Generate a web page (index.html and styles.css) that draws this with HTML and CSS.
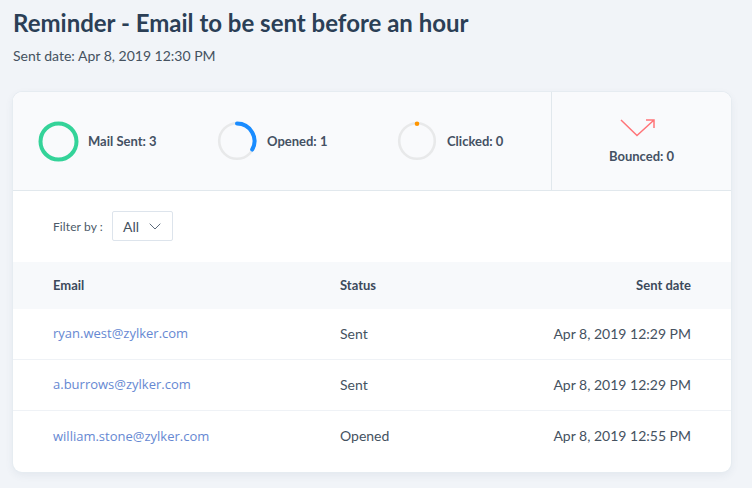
FILE: index.html
```html
<!DOCTYPE html>
<html lang="en">
<head>
<meta charset="utf-8">
<title>Reminder</title>
<link rel="stylesheet" href="styles.css">
</head>
<body>
<h1 class="title">Reminder - Email to be sent before an hour</h1>
<p class="subtitle">Sent date: Apr 8, 2019 12:30 PM</p>
<section class="card">
  <div class="stats">
    <div class="stat-main">
      <div class="stat stat-sent">
        <svg class="ring" width="41" height="41" viewBox="0 0 41 41"><circle cx="20.500" cy="20.500" r="18" fill="none" stroke="#34d399" stroke-width="4"/></svg>
        <span>Mail Sent: 3</span>
      </div>
      <div class="stat stat-opened">
        <svg class="ring" width="40" height="40" viewBox="0 0 40 40"><circle cx="20" cy="20" r="17.800" fill="none" stroke="#e8e9ea" stroke-width="2.600"/><path d="M20 2.500A17.500 17.500 0 0 1 35.200 28.600" fill="none" stroke="#1a8cff" stroke-width="4" stroke-linecap="round"/></svg>
        <span>Opened: 1</span>
      </div>
      <div class="stat stat-clicked">
        <svg class="ring" width="40" height="40" viewBox="0 0 40 40"><circle cx="20" cy="20" r="17.800" fill="none" stroke="#e8e9ea" stroke-width="2.600"/><circle cx="20" cy="2.800" r="2.300" fill="#ff9500"/></svg>
        <span>Clicked: 0</span>
      </div>
    </div>
    <div class="stat-bounced">
      <svg class="bounce" width="36" height="20" viewBox="0 0 36 20"><path d="M1 2L17 17.500L34 2M26 2H34V10" fill="none" stroke="#ff7478" stroke-width="1.500"/></svg>
      <span>Bounced: 0</span>
    </div>
  </div>
  <div class="filter">
    <span class="filter-label">Filter by :</span>
    <div class="select">
      <span>All</span>
      <svg width="12" height="7" viewBox="0 0 12 7"><path d="M.7.7L6 6l5.300-5.300" fill="none" stroke="#5c6b7c" stroke-width="1"/></svg>
    </div>
  </div>
  <div class="row head">
    <div>Email</div><div>Status</div><div class="date">Sent date</div>
  </div>
  <div class="row item">
    <div class="email">ryan.west@zylker.com</div><div>Sent</div><div class="date">Apr 8, 2019 12:29 PM</div>
  </div>
  <div class="row item">
    <div class="email">a.burrows@zylker.com</div><div>Sent</div><div class="date">Apr 8, 2019 12:29 PM</div>
  </div>
  <div class="row item last">
    <div class="email">william.stone@zylker.com</div><div>Opened</div><div class="date">Apr 8, 2019 12:55 PM</div>
  </div>
</section>
</body>
</html>
```
FILE: styles.css
```css
* { box-sizing: border-box; }
html, body { height: 100%; }
body {
  margin: 0;
  padding: 8px 21px 0 13px;
  background: #f1f4f8;
  font-family: Lato, "Liberation Sans", sans-serif;
  color: #3d4b5c;
  overflow: hidden;
}
.title {
  margin: 0;
  font-size: 24px;
  line-height: 30px;
  font-weight: 700;
  color: #2b3f56;
}
.subtitle {
  margin: 8px 0 0;
  font-size: 14px;
  line-height: 20px;
  color: #45525f;
}
.card {
  margin-top: 26px;
  height: 380px;
  background: #fff;
  border-radius: 9px;
  box-shadow: 0 0 0 1px #e6ecf1, 0 3px 8px rgba(50, 80, 110, .08);
  overflow: hidden;
}
.stats {
  display: flex;
  height: 99px;
  background: #f9fafc;
  border-bottom: 1px solid #e1e8ed;
}
.stat-main {
  flex: 1;
  display: flex;
  align-items: center;
  padding-left: 25px;
  border-right: 1px solid #e1e8ed;
}
.stat {
  display: flex;
  align-items: center;
  font-size: 13px;
  font-weight: 700;
  color: #445163;
}
.stat-sent { width: 179px; gap: 9px; }
.stat-opened { width: 180px; gap: 10px; }
.stat-clicked { gap: 10px; }
.ring { flex: none; }
.stat-bounced {
  width: 179px;
  display: flex;
  flex-direction: column;
  align-items: center;
  padding-top: 26px;
  font-size: 13px;
  font-weight: 700;
  color: #445163;
}
.bounce { margin: 0 7px 10px 0; display: block; }
.filter {
  display: flex;
  align-items: center;
  height: 71px;
  padding: 0 0 1px 40px;
}
.filter-label { width: 49px; font-size: 12px; letter-spacing: .1px; white-space: nowrap; color: #4c5a69; }
.select {
  display: flex;
  align-items: center;
  gap: 10px;
  width: 61px;
  height: 30px;
  margin-left: 10px;
  padding-left: 10px;
  border: 1px solid #dde4ec;
  border-radius: 2px;
  background: #fff;
  font-size: 14px;
  color: #45525f;
}
.row {
  display: grid;
  grid-template-columns: 287px 1fr 200px;
  align-items: center;
  padding: 0 40px 1px;
  font-size: 14px;
}
.head {
  height: 47px;
  background: #f7f9fb;
  font-size: 13px;
  font-weight: 700;
  color: #3c4a5b;
}
.item {
  height: 51px;
  padding-bottom: 2px;
  border-bottom: 1px solid #eff2f6;
  color: #45525f;
}
.item.last { border-bottom: 0; }
.date { text-align: right; }
.email {
  font-family: "Open Sans", Lato, sans-serif;
  font-size: 13px;
  color: #6688d2;
}
```
